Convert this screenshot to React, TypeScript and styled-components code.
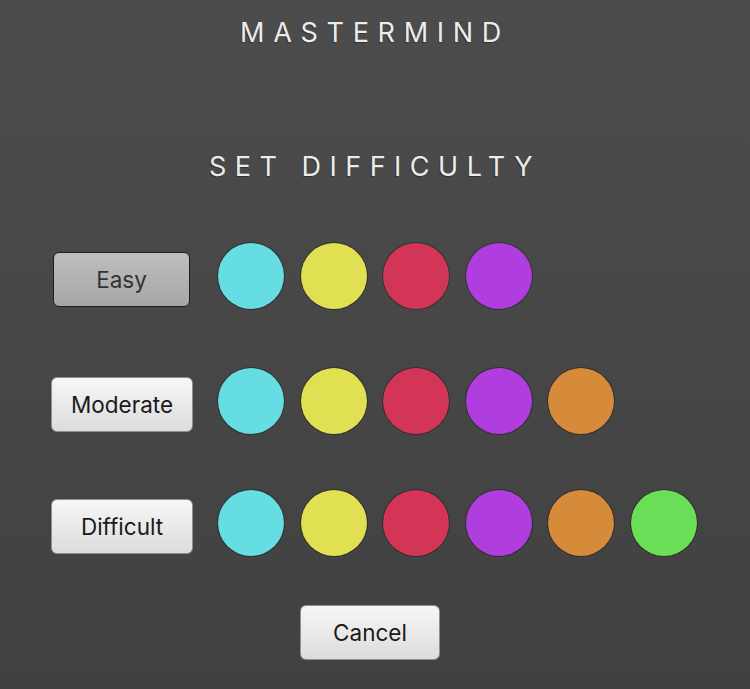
import React from "react";
import styled, { createGlobalStyle, css } from "styled-components";

const Global = createGlobalStyle`
  html, body { margin: 0; padding: 0; }
  body {
    width: 750px;
    height: 689px;
    overflow: hidden;
    background: linear-gradient(#4c4c4c, #414141);
    font-family: Inter, "Liberation Sans", sans-serif;
  }
`;

const Page = styled.div`
  width: 750px;
  height: 689px;
  display: flex;
  flex-direction: column;
  align-items: center;
`;

const Title = styled.h1`
  margin: 17px 0 0;
  font-size: 27px;
  font-weight: 400;
  letter-spacing: 8.7px;
  color: #ececec;
  text-shadow: -1px 1px 0 rgba(0, 0, 0, 0.35);
  line-height: 32px;
`;

const Subtitle = styled.h2`
  margin: 102px 0 0;
  font-size: 27px;
  font-weight: 400;
  letter-spacing: 8.5px;
  color: #ececec;
  text-shadow: -1px 1px 0 rgba(0, 0, 0, 0.35);
  line-height: 32px;
`;

const Rows = styled.div`
  align-self: stretch;
  display: flex;
  flex-direction: column;
  gap: 56px;
  padding-left: 51px;
  margin-top: 60px;
`;

const Row = styled.div`
  display: flex;
  align-items: center;
  gap: 25px;
  &:first-child { margin-bottom: 3px; }
`;

const Dots = styled.div`
  display: flex;
  gap: 16.5px;
`;

const Dot = styled.div<{ $c: string }>`
  width: 66px;
  height: 66px;
  border-radius: 50%;
  background: ${(p) => p.$c};
  box-shadow: 0 0 0 1px rgba(0, 0, 0, 0.3);
`;

const Button = styled.button<{ $pressed?: boolean }>`
  width: 142px;
  height: 55px;
  margin-top: 7px;
  border-radius: 6px;
  font-family: Inter, "Liberation Sans", sans-serif;
  font-size: 22.5px;
  color: #1a1a1a;
  cursor: pointer;
  border: 1px solid #8f8f8f;
  background: linear-gradient(#f7f7f7, #dcdcdc);
  ${(p) =>
    p.$pressed &&
    css`
      width: 137px;
      margin-left: 2px;
      margin-right: 3px;
      color: #333;
      border: 1.5px solid #1e1e1e;
      background: linear-gradient(#bebebe, #a6a6a6);
    `}
`;

const CancelButton = styled(Button)`
  width: 140px;
  height: 55px;
  margin: 49px 10px 0 0;
`;

const colors = ["#66dce3", "#e0e052", "#d23555", "#b03ede", "#d68b3a", "#6ade56"];

const levels = [
  { name: "Easy", count: 4, pressed: true },
  { name: "Moderate", count: 5 },
  { name: "Difficult", count: 6 },
];

export default function App() {
  return (
    <Page>
      <Global />
      <Title>MASTERMIND</Title>
      <Subtitle>SET DIFFICULTY</Subtitle>
      <Rows>
        {levels.map((l) => (
          <Row key={l.name}>
            <Button $pressed={l.pressed}>{l.name}</Button>
            <Dots>
              {colors.slice(0, l.count).map((c) => (
                <Dot key={c} $c={c} />
              ))}
            </Dots>
          </Row>
        ))}
      </Rows>
      <CancelButton>Cancel</CancelButton>
    </Page>
  );
}
